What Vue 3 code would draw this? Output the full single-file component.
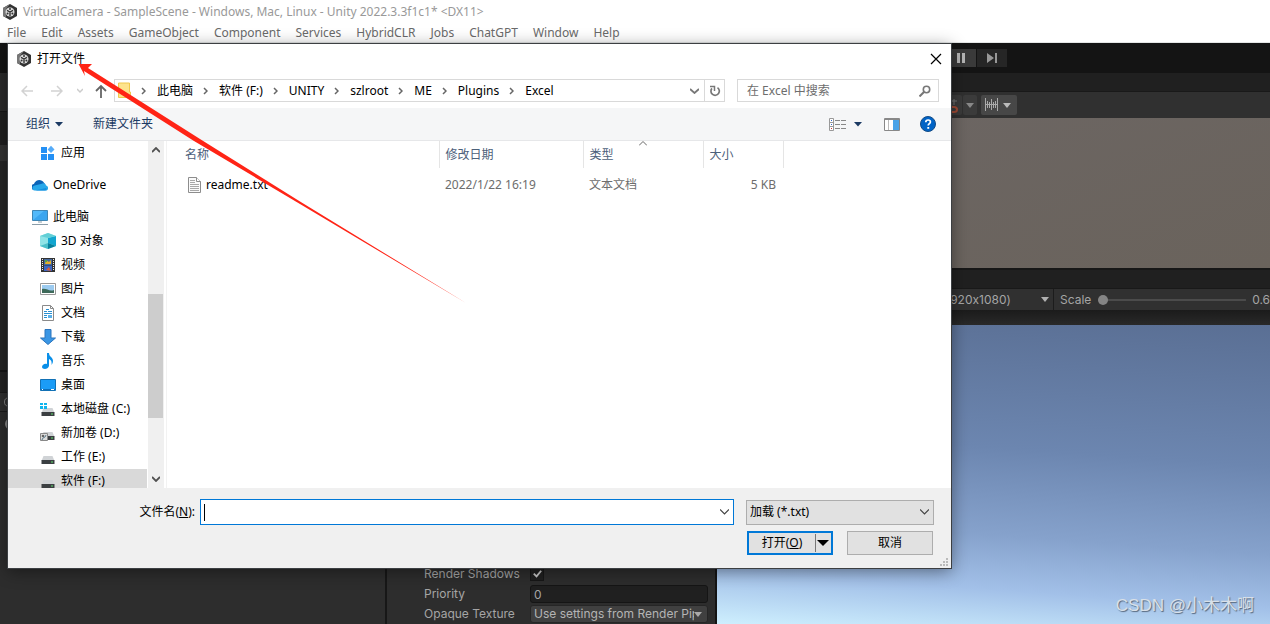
<script setup>
import { ref } from 'vue'

const menus = ['File', 'Edit', 'Assets', 'GameObject', 'Component', 'Services', 'HybridCLR', 'Jobs', 'ChatGPT', 'Window', 'Help']
const crumbs = ['此电脑', '软件 (F:)', 'UNITY', 'szlroot', 'ME', 'Plugins', 'Excel']
const places = [
  { name: '应用', icon: 'apps', level: 2, gap: true },
  { name: 'OneDrive', icon: 'cloud', level: 1, gap: true },
  { name: '此电脑', icon: 'pc', level: 1 },
  { name: '3D 对象', icon: 'cube', level: 2 },
  { name: '视频', icon: 'film', level: 2 },
  { name: '图片', icon: 'picture', level: 2 },
  { name: '文档', icon: 'doc', level: 2 },
  { name: '下载', icon: 'down', level: 2 },
  { name: '音乐', icon: 'music', level: 2 },
  { name: '桌面', icon: 'desk', level: 2 },
  { name: '本地磁盘 (C:)', icon: 'sysdisk', level: 2 },
  { name: '新加卷 (D:)', icon: 'userdisk', level: 2 },
  { name: '工作 (E:)', icon: 'disk', level: 2 },
  { name: '软件 (F:)', icon: 'disk', level: 2, active: true },
]
const fileName = ref('')
const scale = ref(0)
const shadows = ref(true)
const priority = ref('0')
</script>

<template>
  <div class="screen">
    <header class="titlebar">
      <svg class="unity" viewBox="0 0 14 16"><path d="M7 0l7 4v8l-7 4-7-4V4z" fill="#333" /><path d="M7 0L0 4v8l3 1.500V5z" fill="#777" /><circle cx="7" cy="8" r="4.500" fill="#ddd" /><path d="M7 8.500V12M7 8L4 6.300M7 8l3-1.700" stroke="#333" stroke-width="1.400" /><circle cx="7" cy="5" r="1" fill="#333" /><circle cx="4.600" cy="9.600" r="1" fill="#333" /><circle cx="9.400" cy="9.600" r="1" fill="#333" /></svg>
      <span>VirtualCamera - SampleScene - Windows, Mac, Linux - Unity 2022.3.3f1c1* &lt;DX11&gt;</span>
    </header>
    <nav class="menubar">
      <button v-for="m in menus" :key="m">{{ m }}</button>
    </nav>

    <div class="editor">
      <div class="playbar">
        <button class="play on" aria-label="Pause"><svg viewBox="0 0 25 18"><path d="M6 4h3v10H6zM11 4h3v10h-3z" fill="#b5b5b5" /></svg></button>
        <button class="play step" aria-label="Step"><svg viewBox="0 0 30 18"><path d="M10 4l7 5-7 5zM18 4h2v10h-2z" fill="#989898" /></svg></button>
      </div>
      <div class="work">
        <section class="hierarchy">
          <div class="h-top"></div>
          <div class="h-list"></div>
          <div class="h-tab"></div>
          <div class="h-search"><svg viewBox="0 0 8 20"><circle cx="9" cy="10" r="4.500" fill="none" stroke="#8a8a8a" /></svg></div>
          <svg class="h-item" viewBox="0 0 8 24"><circle cx="11" cy="12" r="5" fill="none" stroke="#8a8a8a" stroke-width="2" /></svg>
        </section>
        <section class="inspector">
          <div class="prop"><label for="shadows">Render Shadows</label>
            <span class="tick"><input id="shadows" v-model="shadows" type="checkbox"><svg viewBox="0 0 13 13"><path d="M3 6l3 3 5-6" fill="none" stroke="#c8c8c8" stroke-width="2" /></svg></span>
          </div>
          <div class="prop"><label for="priority">Priority</label><input id="priority" v-model="priority" class="field" type="text"></div>
          <div class="prop"><label for="opaque">Opaque Texture</label>
            <span class="pick"><select id="opaque"><option>Use settings from Render Pipeline Asset</option></select><svg viewBox="0 0 8 5"><path d="M0 0h8L4 5z" fill="#aaa" /></svg></span>
          </div>
        </section>
        <section class="views">
          <div class="tabs"></div>
          <div class="scenebar">
            <button class="magnet" aria-label="Snap"><svg viewBox="0 0 16 20"><path d="M8 4v6M5 6h6" stroke="#777" fill="none" /><path d="M4 12h4c4 0 4 5 0 5H4" fill="none" stroke="#a04a35" stroke-width="2" /></svg></button>
            <button class="drop" aria-label="Snap options"><svg viewBox="0 0 14 20"><path d="M3 8h8l-4 5z" fill="#888" /></svg></button>
            <button class="ruler" aria-label="Grid snapping"><svg viewBox="0 0 36 20"><path d="M4.500 3v13M6.500 6v7M8.500 7v6M10.500 4v11M12.500 7v6M14.500 6v7M16.500 3v13M4 9.500h13" stroke="#aaa" fill="none" /><path d="M22 8h8l-4 5z" fill="#bbb" /></svg></button>
          </div>
          <div class="scene"></div>
          <div class="tabs game-tabs"></div>
          <div class="gamebar">
            <button class="aspect"><span>Full HD (1920x1080)</span><svg viewBox="0 0 8 5"><path d="M0 0h8L4 5z" fill="#b0b0b0" /></svg></button>
            <label for="scale">Scale</label>
            <input id="scale" v-model="scale" type="range" min="0" max="5">
            <output>0.6</output>
          </div>
          <div class="strip"></div>
          <div class="game"><p>CSDN @小木木啊</p></div>
        </section>
      </div>
    </div>

    <div class="dialog" role="dialog" aria-labelledby="dlg-title">
      <div class="dlg-head">
        <svg class="unity" viewBox="0 0 14 16"><path d="M7 0l7 4v8l-7 4-7-4V4z" fill="#333" /><path d="M7 0L0 4v8l3 1.500V5z" fill="#777" /><circle cx="7" cy="8" r="4.500" fill="#ddd" /><path d="M7 8.500V12M7 8L4 6.300M7 8l3-1.700" stroke="#333" stroke-width="1.400" /><circle cx="7" cy="5" r="1" fill="#333" /><circle cx="4.600" cy="9.600" r="1" fill="#333" /><circle cx="9.400" cy="9.600" r="1" fill="#333" /></svg>
        <h1 id="dlg-title">打开文件</h1>
        <button aria-label="关闭"><svg viewBox="0 0 12 12"><path d="M1 1l10 10M11 1L1 11" stroke="#000" stroke-width="1.200" /></svg></button>
      </div>

      <div class="path-row">
        <button class="hist" aria-label="后退"><svg viewBox="0 0 12 12"><path d="M12 6H1M6 1L1 6l5 5" fill="none" stroke="#d2d2d2" stroke-width="1.500" /></svg></button>
        <button class="hist fwd" aria-label="前进"><svg viewBox="0 0 12 12"><path d="M0 6h11M6 1l5 5-5 5" fill="none" stroke="#d2d2d2" stroke-width="1.500" /></svg></button>
        <button class="recent" aria-label="最近位置"><svg viewBox="0 0 6 12"><path d="M0 4l3 3 3-3" fill="none" stroke="#ccc" stroke-width="1.500" /></svg></button>
        <button class="hist up" aria-label="上移"><svg viewBox="0 0 12 14"><path d="M6 14V2M1 7l5-5 5 5" fill="none" stroke="#666" stroke-width="1.800" /></svg></button>
        <div class="address">
          <svg class="folder" viewBox="0 0 13 17"><path d="M.5 1h11v9h1v5.500H.5z" fill="#fde38c" stroke="#f0c84c" /></svg>
          <template v-for="c in crumbs" :key="c">
            <svg class="sep" viewBox="0 0 5 8"><path d="M1 1l3 3-3 3" fill="none" stroke="#666" stroke-width="1.500" /></svg>
            <button class="crumb">{{ c }}</button>
          </template>
          <button class="history" aria-label="历史"><svg viewBox="0 0 9 6"><path d="M0 1l4.500 4L9 1" fill="none" stroke="#777" stroke-width="1.800" /></svg></button>
          <button class="refresh" aria-label="刷新"><svg viewBox="0 0 12 12"><path d="M8.500 2.600a4.200 4.200 0 1 1-5.600.8" fill="none" stroke="#777" stroke-width="1.700" /><path d="M1 1.500h4.500V6" fill="none" stroke="#777" stroke-width="1.500" /></svg></button>
        </div>
        <div class="search">
          <input type="text" aria-label="搜索" placeholder="在 Excel 中搜索">
          <svg viewBox="0 0 12 12"><circle cx="7.500" cy="4.500" r="3.200" fill="none" stroke="#777" stroke-width="1.600" /><path d="M5 7l-4.500 4.500" stroke="#777" stroke-width="2" /></svg>
        </div>
      </div>

      <div class="tools">
        <button>组织<svg class="tri" viewBox="0 0 8 5"><path d="M0 0h8L4 4.500z" fill="#1b3a63" /></svg></button>
        <button class="new">新建文件夹</button>
        <button class="view" aria-label="视图"><svg class="list" viewBox="0 0 17 13"><path d="M.5.5h4v12h-4zM.5 4.500h4M.5 8.500h4" fill="#fff" stroke="#999" /><path d="M2 2h1v1H2zM2 6h1v1H2z" fill="#36c" /><path d="M2 10h1v1H2z" fill="#c33" /><path d="M6 2.500h5M12 2.500h5M6 6.500h5M12 6.500h5M6 10.500h5M12 10.500h5" stroke="#888" /></svg><svg class="tri" viewBox="0 0 8 5"><path d="M0 0h8L4 4.500z" fill="#1b3a63" /></svg></button>
        <button class="pane" aria-label="预览窗格"><svg viewBox="0 0 16 13"><path d="M.5.5h15v12H.5z" fill="#fff" stroke="#888" /><path d="M1 1h14v1H1z" fill="#888" /><path d="M4.500 2v10" stroke="#bbb" /><path d="M9 2h6v10H9z" fill="#4aa3e8" /></svg></button>
        <button class="help" aria-label="帮助"><svg viewBox="0 0 16 16"><circle cx="8" cy="8" r="7.500" fill="#0063c6" stroke="#124b86" /><path d="M5.800 6.200c0-3 4.600-2.800 4.600-.2 0 1.700-2.200 1.700-2.200 3.600" fill="none" stroke="#fff" stroke-width="1.700" /><path d="M7.300 11h1.900v1.800H7.300z" fill="#fff" /></svg></button>
      </div>

      <div class="body">
        <ul class="tree">
          <li v-for="p in places" :key="p.name" :class="{ gap: p.gap, deep: p.level === 2, active: p.active }">
            <svg viewBox="0 0 16 16">
              <g v-if="p.icon === 'apps'"><path d="M1 2h6v6H1zM1 9h6v6H1zM8 9h6v6H8z" fill="#2490f5" /><path d="M11 .8l3.500 3.700L11 8 7.600 4.500z" fill="#55abf8" /></g>
              <g v-else-if="p.icon === 'cloud'"><path d="M3 13a3 3 0 0 1-1-6 5.500 5.500 0 0 1 9-2.500L13 7l-6 6z" fill="#0b64b8" /><path d="M3.500 13.500c-4 0-4-4-1-5L9 7c3-2 5 0 5 1.500 3 .5 2.500 5 0 5z" fill="#28a8ea" /><path d="M3 13.500L14 11c1 1 .5 2.500-1 2.500z" fill="#1490df" /></g>
              <g v-else-if="p.icon === 'pc'"><path d="M.5 1.500h15v10H.5z" fill="#52b9fa" stroke="#3f86b5" /><path d="M1 11L12 2h3v9z" fill="#3aa5ef" /><path d="M6 13h4M0 15.500h16" stroke="#8b9da8" /></g>
              <g v-else-if="p.icon === 'cube'"><path d="M0 3l8-3 8 3v10l-8 3-8-3z" fill="#8fe3e6" /><path d="M8 5l8-2v10l-8-3z" fill="#12a5cf" /><path d="M0 3l8-3 8 3-8 2z" fill="#62cfd6" /><path d="M8 10l8 3-8 3z" fill="#077f9b" /><path d="M0 13l8-3v6z" fill="#4bbfc9" /></g>
              <g v-else-if="p.icon === 'film'"><path d="M1 1h14v14H1z" fill="#333" /><path d="M4 2h8v6H4z" fill="#45699f" /><path d="M4 8.500h8V14H4z" fill="#3b67c5" /><path d="M2.500 2v12M13.500 2v12" stroke="#eee" stroke-dasharray="1 1" /><path d="M6 3l3 2 2-2v4H5z" fill="#e8b02a" /><path d="M5 3h2v2H5z" fill="#55a648" /><path d="M6 13l3-3 2 4z" fill="#d55c3a" /></g>
              <g v-else-if="p.icon === 'picture'"><path d="M.5 2.500h15v11H.5z" fill="#fff" stroke="#999" /><path d="M2 4h12v8H2z" fill="#9ccbf0" /><path d="M2 8c5-1 7 3 12 1v3H2z" fill="#3e6a5a" /></g>
              <g v-else-if="p.icon === 'doc'"><path d="M2.500.5h8l3 3v12h-11z" fill="#fff" stroke="#8a8a8a" /><path d="M10.500.5v3h3" fill="none" stroke="#8a8a8a" /><path d="M6 4.500h3M4 6.500h3M8 6.500h4M4 8.500h8M4 10.500h3M4 12.500h3" stroke="#2a8fd0" /><path d="M8 10h4v3H8z" fill="#5ab0e8" /></g>
              <g v-else-if="p.icon === 'down'"><path d="M5 .5h6V9h4.500L8 15.500.5 9H5z" fill="#3a96e4" stroke="#2a74bd" /></g>
              <g v-else-if="p.icon === 'music'"><path d="M7 0h2c0 4 4 4 4 8 0 2-1 3-1.500 4 .5-4-.5-5-2.500-6v7c-1 4-7 3.500-7 1s3-4 5-3z" fill="#0a8fe8" /></g>
              <g v-else-if="p.icon === 'desk'"><path d="M.5 2.500h15v11H.5z" fill="#1b9cf6" stroke="#1271b5" /><path d="M1 12.500h14" stroke="#0d6fba" /><path d="M2 12.500h1M11 12.500h3" stroke="#fff" /></g>
              <g v-else>
                <path d="M3.500 7h9l2 5h-13z" fill="#d0d3d6" /><path d="M1.500 11h13v4h-13z" fill="#3b3f42" /><path d="M11 12.500h2v1h-2z" fill="#5ee06a" />
                <path v-if="p.icon === 'sysdisk'" d="M0 2h3v2H0zM4 2h3v2H4zM0 5h3v3H0zM4 5h3v3H4z" fill="#0fb5ee" />
                <g v-if="p.icon === 'userdisk'"><path d="M.5 8.500h7v7h-7z" fill="#ddd" stroke="#888" /><circle cx="3" cy="11" r="1.300" fill="#666" /><path d="M2 15c0-3 4-2 4-5" fill="none" stroke="#578" /></g>
              </g>
            </svg>
            <span>{{ p.name }}</span>
          </li>
        </ul>
        <div class="scroll">
          <button aria-label="向上滚动"><svg viewBox="0 0 8 6"><path d="M0 5l4-4 4 4" fill="none" stroke="#505050" stroke-width="1.800" /></svg></button>
          <div class="track"><div class="thumb"></div></div>
          <button aria-label="向下滚动"><svg viewBox="0 0 8 6"><path d="M0 1l4 4 4-4" fill="none" stroke="#505050" stroke-width="1.800" /></svg></button>
        </div>
        <div class="files">
          <table>
            <colgroup><col class="c-name"><col class="c-date"><col class="c-type"><col class="c-size"></colgroup>
            <thead>
              <tr><th class="first">名称</th><th>修改日期</th><th class="sorted">类型<svg viewBox="0 0 8 5"><path d="M0 4.500l4-4 4 4" fill="none" stroke="#666" /></svg></th><th>大小</th></tr>
            </thead>
            <tbody>
              <tr>
                <td class="first"><span class="entry"><svg viewBox="0 0 13 16"><path d="M.5.5h8l4 4v11H.5z" fill="#fafafa" stroke="#8d8d8d" /><path d="M8.500.5v4h4" fill="#fff" stroke="#8d8d8d" /><path d="M2 3.500h5M2 5.500h5M2 7.500h9M2 9.500h9M2 11.500h9M2 13.500h9" stroke="#a8a8a8" /></svg>readme.txt</span></td>
                <td>2022/1/22 16:19</td><td>文本文档</td><td class="num">5 KB</td>
              </tr>
            </tbody>
          </table>
        </div>
      </div>

      <footer>
        <div class="name-row">
          <label for="fname">文件名(<u>N</u>):</label>
          <div class="combo">
            <span class="caret"></span>
            <input id="fname" v-model="fileName" type="text">
            <button aria-label="以前的文件名"><svg viewBox="0 0 9 6"><path d="M0 .5l4.500 4.500L9 .5" fill="none" stroke="#444" stroke-width="1.200" /></svg></button>
          </div>
          <span class="filter"><select aria-label="文件类型"><option>加载 (*.txt)</option></select><svg viewBox="0 0 9 6"><path d="M0 .5l4.500 4.500L9 .5" fill="none" stroke="#444" stroke-width="1.200" /></svg></span>
        </div>
        <div class="actions">
          <div class="split">
            <button class="open">打开(<u>O</u>)</button>
            <button class="more" aria-label="打开选项"><svg viewBox="0 0 12 6"><path d="M0 0h12L6 6z" fill="#000" /></svg></button>
          </div>
          <button class="cancel">取消</button>
        </div>
        <svg class="grip" viewBox="0 0 8 8"><path d="M6 0h2v2H6zM3 3h2v2H3zM6 3h2v2H6zM0 6h2v2H0zM3 6h2v2H3zM6 6h2v2H6z" fill="#bbb" /></svg>
      </footer>
    </div>

    <svg class="pointer" viewBox="0 0 390 242"><path d="M.5 2H14l-4 4 112 71 100 62.500L388 241 222 142 116 79 6 9l1 5z" fill="#ff2416" /></svg>
  </div>
</template>

<style>
html, body, #app { height: 100%; }
body { margin: 0; }
</style>

<style scoped>
.screen {
  position: relative;
  display: flex;
  flex-direction: column;
  height: 100%;
  overflow: hidden;
  background: #2d2d2d;
  font: 12px/16px "Noto Sans", "Noto Sans CJK SC", sans-serif;
}
* { box-sizing: border-box; }
button, input, select { font: inherit; color: inherit; margin: 0; padding: 0; border: 0; background: none; border-radius: 0; outline: 0; }
svg { display: block; flex: none; }
.unity { width: 14px; height: 16px; }

.titlebar { display: flex; align-items: center; gap: 6px; height: 24px; padding-left: 3px; background: #fff; color: #999; }
.menubar { display: flex; height: 19px; padding-left: 7px; gap: 15px; color: #6a6a6a; background: #fff; border-bottom: 1px solid #e4e6e6; }
.menubar button { height: 18px; white-space: nowrap; }

.editor { flex: 1; min-height: 0; display: flex; flex-direction: column; color: #a5a5a5; font-family: Inter, "Noto Sans CJK SC", sans-serif; font-feature-settings: "calt" 0; }
.playbar { flex: none; display: flex; align-items: center; gap: 1px; height: 30px; padding-left: 951px; background: #141414; }
.play { width: 25px; height: 18px; }
.play svg { width: 100%; height: 18px; }
.on { background: #3a3a3a; }
.step { width: 30px; background: #262626; }
.work { flex: 1; min-height: 0; display: flex; }
.hierarchy { width: 387px; flex: none; border-right: 2px solid #171717; background: #2d2d2d; }
.h-top { height: 39px; background: #2b2b2b; border-bottom: 1px solid #171717; }
.h-list { height: 260px; background: linear-gradient(#202020 33px, #333 33px, #333 49px, #262626 49px); border-bottom: 2px solid #151515; }
.h-tab { height: 20px; background: #232323; }
.h-search { height: 20px; background: #303030; border: 1px solid #1b1b1b; border-left: 0; }
.h-search svg { width: 8px; height: 18px; }
.h-item { width: 8px; height: 24px; }
.inspector { width: 330px; flex: none; display: flex; flex-direction: column; justify-content: flex-end; padding: 0 7px 0 37px; border-right: 2px solid #141414; background: #2d2d2d; }
.prop { display: flex; align-items: center; height: 20px; }
.prop label { width: 106px; font-size: 12px; white-space: nowrap; }
.tick { display: grid; width: 14px; height: 14px; background: #202020; border: 1px solid #171717; }
.tick input { grid-area: 1 / 1; appearance: none; width: 12px; height: 12px; }
.tick svg { grid-area: 1 / 1; width: 12px; height: 12px; pointer-events: none; }
.field { flex: 1; min-width: 0; height: 18px; padding: 0 3px; background: #202020; border: 1px solid #151515; border-radius: 3px; }
.pick { flex: 1; min-width: 0; display: flex; align-items: center; height: 18px; padding: 0 5px 0 3px; background: #404040; border: 1px solid #262626; border-radius: 3px; }
.pick select { flex: 1; min-width: 0; appearance: none; height: 16px; color: #b4b4b4; text-overflow: clip; }
.pick svg { width: 8px; height: 5px; }

.views { flex: 1; min-width: 0; display: flex; flex-direction: column; }
.tabs { flex: none; height: 19px; background: #202020; border-bottom: 1px solid #191919; }
.scenebar { flex: none; display: flex; align-items: center; height: 26px; padding-left: 229px; background: #303030; }
.scenebar button { height: 20px; background: #3b3b3b; border-radius: 2px; }
.scenebar svg { height: 20px; width: 100%; }
.magnet { width: 16px; }
.drop { width: 14px; margin: 0 4px 0 1px; }
.scenebar .ruler { width: 36px; background: #474747; }
.scene { flex: 0 1 150px; min-height: 0; background: linear-gradient(160deg, #6c6664, #6a635c); }
.game-tabs { height: 21px; border-top: 2px solid #171717; }
.gamebar { flex: none; display: flex; align-items: center; height: 21px; background: #303030; }
.aspect { display: flex; align-items: center; justify-content: space-between; width: 337px; height: 21px; padding: 0 4px 0 180px; border-right: 1px solid #1c1c1c; white-space: nowrap; }
.aspect svg { width: 8px; height: 5px; }
.gamebar label { margin-left: 6px; }
.gamebar input { appearance: none; flex: 1; min-width: 0; height: 12px; margin: 0 6px 0 7px; background: linear-gradient(#4b4b4b, #4b4b4b) center / 100% 2px no-repeat; }
.gamebar input::-webkit-slider-thumb { appearance: none; width: 10px; height: 10px; border-radius: 50%; background: #848484; }
.strip { flex: none; height: 15px; background: linear-gradient(#1b1b1b, #292929); }
.game { flex: 1; display: flex; align-items: flex-end; justify-content: flex-end; padding: 0 16px 6px; background: linear-gradient(184deg, #5a6f94, #6c86b0 42%, #86a2cc 68%, #a2c0e8 84%, #ceeffe); }
.game p { margin: 0; font: 17px/24px "Liberation Sans", "Noto Sans CJK SC", sans-serif; color: #d9e0e8; text-shadow: 1px 1px 1px #56677c; }

.dialog {
  position: absolute;
  inset: 44px 319px 56px 8px;
  display: flex;
  flex-direction: column;
  background: #fff;
  color: #000;
  box-shadow: 0 0 0 1px #3c3f42, 0 3px 16px rgba(0, 0, 0, .45);
}
.dlg-head { flex: none; display: flex; align-items: center; height: 29px; padding: 0 9px; }
.dlg-head h1 { flex: 1; margin: 0 0 0 6px; font: inherit; }
.dlg-head button, .dlg-head button svg { width: 12px; height: 12px; }

.path-row { flex: none; display: flex; align-items: center; height: 35px; padding: 0 12px 0 13px; }
.hist, .hist svg { width: 12px; height: 14px; }
.fwd { margin-left: 18px; }
.recent { margin-left: 14px; }
.recent svg { width: 6px; height: 12px; }
.up { margin-left: 12px; }
.address { flex: 1; min-width: 0; display: flex; align-items: center; height: 23px; margin-left: 7px; padding-left: 3px; border: 1px solid #d9d9d9; }
.folder { width: 13px; height: 17px; }
.sep { width: 5px; height: 8px; margin: 0 11px 0 10px; }
.crumb { white-space: nowrap; }
.history { margin-left: auto; padding: 0 5px; }
.history svg { width: 9px; height: 6px; }
.refresh { height: 21px; padding: 0 3px 0 4px; border-left: 1px solid #d9d9d9; }
.refresh svg { width: 12px; height: 12px; }
.search { display: flex; align-items: center; width: 202px; height: 23px; margin-left: 12px; padding: 0 7px 0 9px; border: 1px solid #d9d9d9; }
.search input { flex: 1; min-width: 0; }
.search input::placeholder { color: #6d6d6d; opacity: 1; }
.search svg { width: 12px; height: 12px; }

.tools { flex: none; display: flex; align-items: center; height: 33px; padding: 0 15px 0 18px; background: #f5f6f7; border-bottom: 1px solid #e6e7e9; color: #1b3a63; }
.tools button { display: flex; align-items: center; }
.tri { width: 8px; height: 5px; margin-left: 5px; }
.new { margin-left: 30px; }
.view { margin-left: auto; }
.list { width: 17px; height: 13px; }
.view .tri { margin-left: 8px; }
.pane { margin-left: 22px; }
.pane svg { width: 16px; height: 13px; }
.help { margin-left: 20px; }
.help svg { width: 16px; height: 16px; }

.body { flex: 1; min-height: 0; display: flex; }
.tree { width: 139px; flex: none; margin: 0; padding: 0; list-style: none; overflow: hidden; }
.tree li { display: flex; align-items: center; gap: 5px; height: 24px; padding-left: 24px; white-space: nowrap; }
.tree .deep { padding-left: 32px; }
.tree .gap { margin-bottom: 8px; }
.tree .active { background: #d9d9d9; }
.tree svg { width: 16px; height: 16px; }
.scroll { flex: none; display: flex; flex-direction: column; width: 16px; margin-left: 1px; background: #f0f0f0; }
.scroll button { display: grid; place-items: center; height: 18px; }
.scroll svg { width: 8px; height: 6px; }
.track { flex: 1; display: flex; flex-direction: column; justify-content: flex-end; }
.thumb { height: 40%; margin: 0 1px 52px 0; background: #cdcdcd; }
.files { flex: 1; min-width: 0; margin-left: 2px; border-left: 1px solid #f2f2f2; }
table { table-layout: fixed; width: 616px; border-collapse: collapse; }
.c-name { width: 272px; }
.c-date { width: 144px; }
.c-type { width: 120px; }
.c-size { width: 80px; }
th { height: 27px; padding: 0 0 0 6px; text-align: left; font-weight: normal; color: #4c607a; border-right: 1px solid #e5e5e5; }
th.first { padding-left: 18px; }
th.sorted { position: relative; }
th.sorted svg { position: absolute; top: 0; left: calc(50% - 4px); width: 8px; height: 5px; }
td { height: 34px; padding: 0 0 0 6px; color: #6d6d6d; }
td.first { padding-left: 21px; color: #000; }
td.num { text-align: right; padding-right: 7px; }
.entry { display: flex; align-items: center; gap: 5px; }
.entry svg { width: 13px; height: 16px; }

footer { flex: none; position: relative; padding: 11px 17px 13px 8px; background: #f0f0f0; }
.name-row { display: flex; align-items: center; }
.name-row label { width: 184px; padding-right: 5px; text-align: right; }
.combo { flex: 1; min-width: 0; display: flex; align-items: center; height: 26px; padding: 0 4px 0 3px; background: #fff; border: 1px solid #0078d7; }
.caret { width: 1px; height: 17px; background: #000; }
.combo input { flex: 1; min-width: 0; height: 22px; }
.combo svg, .filter svg { width: 9px; height: 6px; }
.filter { display: flex; align-items: center; width: 188px; height: 25px; margin-left: 12px; padding: 0 4px 0 3px; background: #e1e1e1; border: 1px solid #adadad; }
.filter select { flex: 1; min-width: 0; appearance: none; height: 22px; }
.actions { display: flex; justify-content: flex-end; gap: 14px; margin-top: 6px; padding-right: 1px; }
.split { display: flex; width: 86px; height: 24px; background: #e1e1e1; border: 2px solid #0078d7; }
.open { flex: 1; }
.more { width: 16px; height: 18px; margin-top: 1px; padding-left: 1px; border-left: 1px solid #777; }
.more svg { width: 12px; height: 6px; }
.cancel { width: 86px; height: 24px; background: #e1e1e1; border: 1px solid #adadad; }
.grip { position: absolute; right: 3px; bottom: 2px; width: 8px; height: 8px; }

.pointer { position: absolute; left: 78px; top: 62px; width: 390px; height: 242px; pointer-events: none; }
</style>
